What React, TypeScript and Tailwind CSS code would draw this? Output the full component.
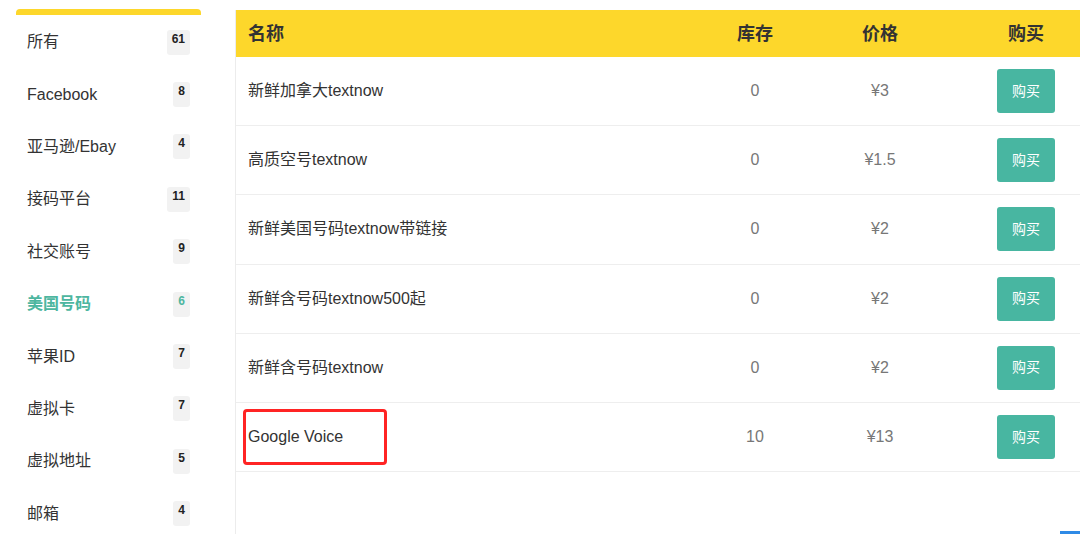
const categories = [
  { name: "所有", count: 61 },
  { name: "Facebook", count: 8 },
  { name: "亚马逊/Ebay", count: 4 },
  { name: "接码平台", count: 11 },
  { name: "社交账号", count: 9 },
  { name: "美国号码", count: 6, active: true },
  { name: "苹果ID", count: 7 },
  { name: "虚拟卡", count: 7 },
  { name: "虚拟地址", count: 5 },
  { name: "邮箱", count: 4 },
];

const products = [
  { name: "新鲜加拿大textnow", stock: 0, price: "¥3" },
  { name: "高质空号textnow", stock: 0, price: "¥1.5" },
  { name: "新鲜美国号码textnow带链接", stock: 0, price: "¥2" },
  { name: "新鲜含号码textnow500起", stock: 0, price: "¥2" },
  { name: "新鲜含号码textnow", stock: 0, price: "¥2" },
  { name: "Google Voice", stock: 10, price: "¥13", marked: true },
];

const cols = "grid grid-cols-[459px_120px_130px_162px]";

function Sidebar() {
  return (
    <aside className="w-[235px] shrink-0 pl-4 pr-[34px] pt-[9px]">
      <div className="h-[6px] rounded-t-[4px] bg-[#fdd72b]" />
      <ul className="mt-px">
        {categories.map((c) => (
          <li key={c.name} className="flex h-[52.4px] items-center justify-between pl-[11px] pr-[11px]">
            <span
              className={
                c.active
                  ? "text-[16px] font-bold text-[#4db6a0]"
                  : "text-[16px] text-[#333]"
              }
            >
              {c.name}
            </span>
            <span
              className={`flex h-[25px] min-w-[16px] justify-center rounded-[3px] bg-[#f2f2f2] px-[5px] pt-[1px] text-[12px] font-bold leading-[16px] ${
                c.active ? "text-[#4db6a0]" : "text-[#222]"
              }`}
            >
              {c.count}
            </span>
          </li>
        ))}
      </ul>
    </aside>
  );
}

function ProductTable() {
  return (
    <section className="mt-[10px] w-[871px] shrink-0 border-l border-[#ececec]">
      <div className={`${cols} h-[47px] items-center bg-[#fdd72b] pt-px text-[18px] font-bold text-[#333]`}>
        <div className="pl-3">名称</div>
        <div className="text-center">库存</div>
        <div className="text-center">价格</div>
        <div className="text-center">购买</div>
      </div>
      {products.map((p) => (
        <div
          key={p.name}
          className={`${cols} h-[69.2px] items-center border-b border-[#eeeeee] text-[16px]`}
        >
          <div className="relative pl-3 text-[#333]">
            {p.name}
            {p.marked && (
              <span className="absolute left-[7px] top-[-16px] h-[56px] w-[144px] rounded-[4px] border-[3px] border-[#ff2424]" />
            )}
          </div>
          <div className="text-center text-[#777]">{p.stock}</div>
          <div className="text-center text-[#777]">{p.price}</div>
          <div className="flex justify-center">
            <button className="h-[44px] w-[58px] rounded-[3px] bg-[#48b6a1] text-[14px] text-white">
              购买
            </button>
          </div>
        </div>
      ))}
    </section>
  );
}

export default function App() {
  return (
    <div
      className="relative flex h-[534px] w-[1080px] overflow-hidden bg-white"
      style={{ fontFamily: '"Liberation Sans", "Noto Sans CJK SC", sans-serif' }}
    >
      <Sidebar />
      <ProductTable />
      <div className="absolute bottom-0 right-0 h-[3px] w-[20px] bg-[#2e8ae6]" />
    </div>
  );
}
